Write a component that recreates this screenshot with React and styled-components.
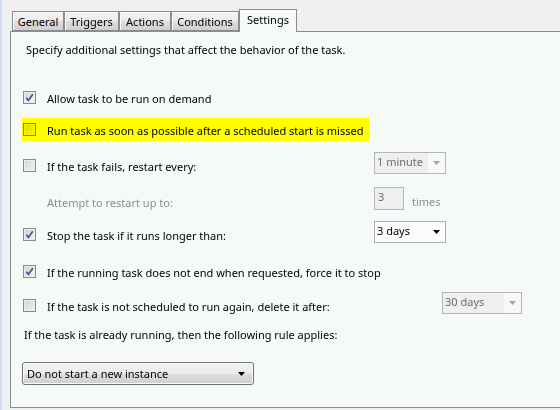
import React from "react";
import styled, { createGlobalStyle } from "styled-components";

const GlobalStyle = createGlobalStyle`
  html, body {
    margin: 0;
    padding: 0;
    background: #f0f0f0;
  }
  body {
    font-family: "Noto Sans", "Segoe UI", sans-serif;
    font-size: 11px;
    color: #000;
  }
`;

const Window = styled.div`
  width: 560px;
  height: 410px;
  box-sizing: border-box;
  border-left: 2px solid #cddcf0;
  padding: 9px 0 0 8px;
  overflow: hidden;
`;

const TabStrip = styled.div`
  display: flex;
  align-items: flex-end;
  height: 22px;
  margin-left: 2px;
`;

const Tab = styled.div`
  box-sizing: border-box;
  width: ${(p) => p.w}px;
  height: ${(p) => (p.active ? 23 : 20)}px;
  margin-bottom: ${(p) => (p.active ? -1 : 0)}px;
  border: 1px solid #898c95;
  border-bottom: ${(p) => (p.active ? "none" : "1px solid #898c95")};
  position: relative;
  z-index: ${(p) => (p.active ? 2 : 1)};
  display: flex;
  align-items: ${(p) => (p.active ? "flex-start" : "center")};
  padding-top: ${(p) => (p.active ? 2 : 0)}px;
  justify-content: center;
  background: ${(p) =>
    p.active
      ? "#f6faf6"
      : "linear-gradient(#f3f3f3 0%, #ebebeb 50%, #dedede 52%, #d0d0d0 100%)"};
  box-shadow: ${(p) => (p.active ? "none" : "inset 1px 1px 0 #fcfcfc")};
`;

const Panel = styled.div`
  box-sizing: border-box;
  height: 377px;
  border: 1px solid #898c95;
  border-right: none;
  background: #f6faf6;
  padding: 0 0 0 12px;
  display: flex;
  flex-direction: column;
`;

const Intro = styled.div`
  margin: 10px 0 0 3px;
  line-height: 16px;
`;

const Row = styled.div`
  display: grid;
  grid-template-columns: 24px ${(p) => (p.labelW ? `${p.labelW}px auto` : "auto")};
  align-items: center;
  height: ${(p) => p.h || 22}px;
  margin-top: ${(p) => p.top}px;

  & > *:not(:last-child) {
    margin-top: ${(p) => p.lower || 0}px;
  }
`;

const HighlightRow = styled(Row)`
  width: 346px;
  margin-left: -1px;
  padding-left: 1px;
  background: #ffff00;
  box-shadow: 0 0 1px 0 #ffff00;
`;

const Label = styled.span`
  color: ${(p) => (p.disabled ? "#8d8d8d" : "#000")};
  padding-top: 2px;
`;

const Box = styled.span`
  box-sizing: border-box;
  width: 13px;
  height: 13px;
  border: 1px solid #8e8f8f;
  background: linear-gradient(135deg, #d6d8da 0%, #eceeef 60%, #fbfbfb 100%);
  box-shadow: inset 0 0 0 1px #f4f4f4;
  display: flex;
  align-items: center;
  justify-content: center;
  mix-blend-mode: multiply;
`;

const Check = ({ checked }) => (
  <Box>
    {checked && (
      <svg width="9" height="9" viewBox="0 0 9 9">
        <path
          d="M1.4 4.8 L3.4 7.4 L7.8 1.2"
          fill="none"
          stroke="#3c52a0"
          strokeWidth="1.7"
        />
      </svg>
    )}
  </Box>
);

const Combo = styled.div`
  box-sizing: border-box;
  width: ${(p) => p.w}px;
  height: 22px;
  border: 1px solid ${(p) => (p.disabled ? "#b4b7ba" : "#abadb3")};
  background: ${(p) => (p.disabled ? "#f8f8f8" : "#fbfdfb")};
  display: flex;
  align-items: stretch;
  color: ${(p) => (p.disabled ? "#6d6d6d" : "#000")};
`;

const ComboText = styled.div`
  flex: 1;
  padding: 0 2px;
  line-height: 18px;
  background: ${(p) => (p.disabled ? "#efefef" : "transparent")};
`;

const ArrowCell = styled.div`
  width: 17px;
  display: flex;
  align-items: center;
  justify-content: center;
`;

const Arrow = ({ color }) => (
  <svg width="7" height="4" viewBox="0 0 7 4">
    <path d="M0 0 H7 L3.5 4 Z" fill={color} />
  </svg>
);

const Dropdown = ({ value, w, disabled }) => (
  <Combo w={w} disabled={disabled}>
    <ComboText disabled={disabled}>{value}</ComboText>
    <ArrowCell>
      <Arrow color={disabled ? "#a6a6a6" : "#000"} />
    </ArrowCell>
  </Combo>
);

const NumBox = styled.div`
  box-sizing: border-box;
  width: 30px;
  height: 23px;
  border: 1px solid #b4b7ba;
  background: #efefef;
  color: #6d6d6d;
  padding: 0 3px;
  line-height: 17px;
`;

const Times = styled.span`
  color: #8d8d8d;
  margin-left: 8px;
  padding-top: 6px;
`;

const Attempt = styled.div`
  display: flex;
  align-items: center;
`;

const RuleText = styled.div`
  margin: 11px 0 0 1px;
  line-height: 22px;
`;

const RuleButton = styled.div`
  box-sizing: border-box;
  width: 232px;
  height: 23px;
  margin: 16px 0 0 -1px;
  border: 1px solid #707070;
  border-radius: 3px;
  background: linear-gradient(#f2f2f2 0%, #ebebeb 50%, #dddddd 52%, #cfcfcf 100%);
  box-shadow: inset 0 0 0 1px #fcfcfc;
  display: flex;
  align-items: center;
  justify-content: space-between;
  padding: 0 8px 0 4px;
`;

const tabs = [
  { name: "General", w: 52 },
  { name: "Triggers", w: 55 },
  { name: "Actions", w: 52 },
  { name: "Conditions", w: 68 },
  { name: "Settings", w: 58, active: true },
];

export default function App() {
  return (
    <Window>
      <GlobalStyle />
      <TabStrip>
        {tabs.map((t) => (
          <Tab key={t.name} w={t.w} active={t.active}>
            {t.name}
          </Tab>
        ))}
      </TabStrip>
      <Panel>
        <Intro>Specify additional settings that affect the behavior of the task.</Intro>

        <Row top={28}>
          <Check checked />
          <Label>Allow task to be run on demand</Label>
        </Row>

        <HighlightRow top={10} h={23}>
          <Check />
          <Label>Run task as soon as possible after a scheduled start is missed</Label>
        </HighlightRow>

        <Row top={10} labelW={327} lower={6}>
          <Check />
          <Label>If the task fails, restart every:</Label>
          <Dropdown value="1 minute" w={72} disabled />
        </Row>

        <Row top={14} h={23} labelW={327} lower={6}>
          <span />
          <Label disabled>Attempt to restart up to:</Label>
          <Attempt>
            <NumBox>3</NumBox>
            <Times>times</Times>
          </Attempt>
        </Row>

        <Row top={10} labelW={327} lower={6}>
          <Check checked />
          <Label>Stop the task if it runs longer than:</Label>
          <Dropdown value="3 days" w={72} />
        </Row>

        <Row top={18}>
          <Check checked />
          <Label>If the running task does not end when requested, force it to stop</Label>
        </Row>

        <Row top={9} labelW={395} lower={6}>
          <Check />
          <Label>If the task is not scheduled to run again, delete it after:</Label>
          <Dropdown value="30 days" w={80} disabled />
        </Row>

        <RuleText>If the task is already running, then the following rule applies:</RuleText>

        <RuleButton>
          <span>Do not start a new instance</span>
          <Arrow color="#000" />
        </RuleButton>
      </Panel>
    </Window>
  );
}
